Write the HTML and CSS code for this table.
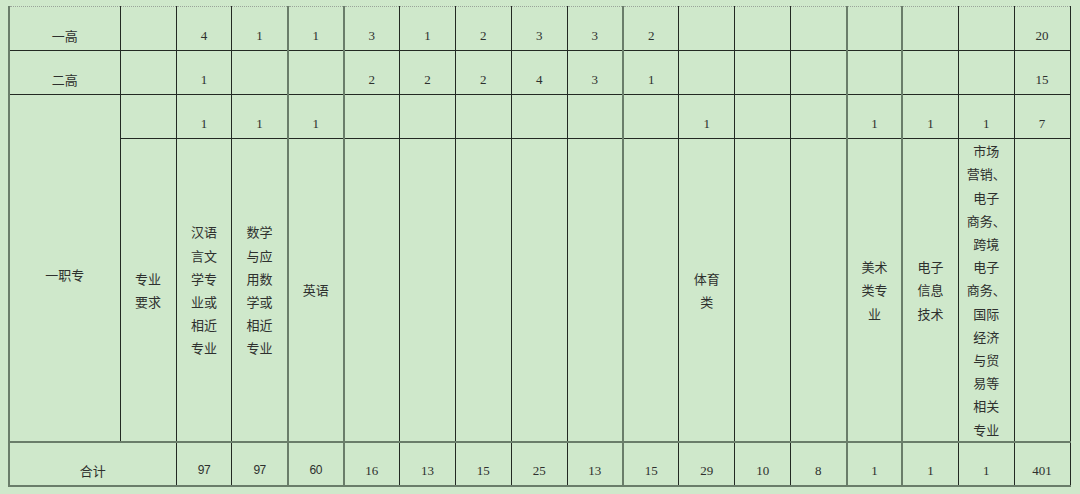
FILE: index.html
```html
<!DOCTYPE html>
<html lang="zh">
<head>
<meta charset="utf-8">
<link rel="stylesheet" href="styles.css">
</head>
<body>
<div class="page">
<table class="plan">
  <colgroup>
    <col class="c-name">
    <col class="c-sub">
    <col class="c-n"><col class="c-n"><col class="c-n"><col class="c-n">
    <col class="c-n"><col class="c-n"><col class="c-n"><col class="c-n">
    <col class="c-n"><col class="c-n"><col class="c-n"><col class="c-n">
    <col class="c-n"><col class="c-n"><col class="c-n"><col class="c-n">
  </colgroup>
  <tr class="row">
    <td>一高</td><td></td>
    <td class="num">4</td><td class="num">1</td><td class="num">1</td><td class="num">3</td>
    <td class="num">1</td><td class="num">2</td><td class="num">3</td><td class="num">3</td>
    <td class="num">2</td><td></td><td></td><td></td>
    <td></td><td></td><td></td><td class="num">20</td>
  </tr>
  <tr class="row">
    <td>二高</td><td></td>
    <td class="num">1</td><td></td><td></td><td class="num">2</td>
    <td class="num">2</td><td class="num">2</td><td class="num">4</td><td class="num">3</td>
    <td class="num">1</td><td></td><td></td><td></td>
    <td></td><td></td><td></td><td class="num">15</td>
  </tr>
  <tr class="row">
    <td rowspan="2">一职专</td><td></td>
    <td class="num">1</td><td class="num">1</td><td class="num">1</td><td></td>
    <td></td><td></td><td></td><td></td>
    <td></td><td class="num">1</td><td></td><td></td>
    <td class="num">1</td><td class="num">1</td><td class="num">1</td><td class="num">7</td>
  </tr>
  <tr class="big">
    <td>专业<br>要求</td>
    <td>汉语<br>言文<br>学专<br>业或<br>相近<br>专业</td>
    <td>数学<br>与应<br>用数<br>学或<br>相近<br>专业</td>
    <td>英语</td>
    <td></td><td></td><td></td><td></td><td></td><td></td>
    <td>体育<br>类</td>
    <td></td><td></td>
    <td>美术<br>类专<br>业</td>
    <td>电子<br>信息<br>技术</td>
    <td>市场<br>营销、<br>电子<br>商务、<br>跨境<br>电子<br>商务、<br>国际<br>经济<br>与贸<br>易等<br>相关<br>专业</td>
    <td></td>
  </tr>
  <tr class="row total">
    <td colspan="2">合计</td>
    <td class="num sans">97</td><td class="num sans">97</td><td class="num sans">60</td><td class="num">16</td>
    <td class="num">13</td><td class="num">15</td><td class="num">25</td><td class="num">13</td>
    <td class="num">15</td><td class="num">29</td><td class="num">10</td><td class="num">8</td>
    <td class="num">1</td><td class="num">1</td><td class="num">1</td><td class="num">401</td>
  </tr>
</table>
</div>
</body>
</html>
```

FILE: styles.css
```css
html, body {
  margin: 0;
  padding: 0;
  background: #cfe8cb;
}

.page {
  width: 1080px;
  height: 494px;
  overflow: hidden;
  background: #cfe8cb;
  padding: 6px 0 0 8px;
  box-sizing: border-box;
}

.plan {
  border-collapse: collapse;
  table-layout: fixed;
  width: 1062px;
  font-family: "Noto Sans CJK SC", "Noto Sans", sans-serif;
  font-size: 13px;
  line-height: 23.2px;
  color: #2e302e;
}

.c-name { width: 111px; }
.c-sub { width: 56px; }
.c-n { width: 55.875px; }

.plan td {
  border: 1px solid #232923;
  text-align: center;
  vertical-align: middle;
  padding: 0;
  overflow: hidden;
}

.plan tr:first-child td {
  border-top: 1px dotted #9aa59a;
}

.row td {
  height: 29px;
  padding-top: 14px;
}

.row td:first-child {
  border-left: 2px solid #6a7d6a;
}

/* thicker grey column rules */
.row:not(.total) td:nth-child(5),
.row:not(.total) td:nth-child(6),
.row:not(.total) td:nth-child(11),
.row:not(.total) td:nth-child(15),
.row:not(.total) td:nth-child(16),
.big td:nth-child(4),
.big td:nth-child(5),
.big td:nth-child(10),
.big td:nth-child(14),
.big td:nth-child(15),
.total td:nth-child(4),
.total td:nth-child(5),
.total td:nth-child(10),
.total td:nth-child(14),
.total td:nth-child(15) {
  border-left: 2px solid #6a7d6a;
}

.big td {
  height: 302px;
  padding: 0;
}

.total td {
  height: 28px;
  border-top: 2px solid #6a7d6a;
  border-bottom: 2px solid #6a7d6a;
}

.num {
  font-family: "Liberation Serif", "DejaVu Serif", serif;
  font-size: 13px;
}

.num.sans {
  font-family: "Liberation Sans", Arial, sans-serif;
  font-size: 12px;
  letter-spacing: -0.5px;
}
```
